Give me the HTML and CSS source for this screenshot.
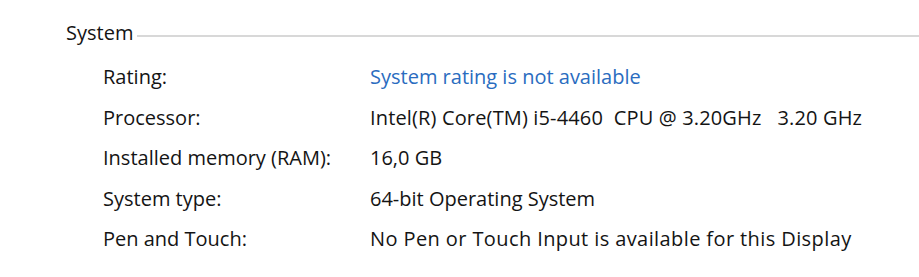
FILE: index.html
```html
<!DOCTYPE html>
<html lang="en">
<head>
<meta charset="utf-8">
<title>System</title>
<link rel="stylesheet" href="styles.css">
</head>
<body>
<section class="group">
  <div class="group-header">
    <span class="group-title">System</span>
    <span class="group-rule"></span>
  </div>
  <div class="props">
    <div class="label">Rating:</div>
    <div class="value"><a class="link" href="#">System rating is not available</a></div>
    <div class="label">Processor:</div>
    <div class="value pre">Intel(R) Core(TM) i5-4460  CPU @ 3.20GHz   3.20 GHz</div>
    <div class="label">Installed memory (RAM):</div>
    <div class="value">16,0 GB</div>
    <div class="label">System type:</div>
    <div class="value">64-bit Operating System</div>
    <div class="label">Pen and Touch:</div>
    <div class="value wide">No Pen or Touch Input is available for this Display</div>
  </div>
</section>
</body>
</html>
```
FILE: styles.css
```css
html, body {
  margin: 0;
  padding: 0;
  background: #ffffff;
}
body {
  font-family: "Open Sans", "Noto Sans", sans-serif;
  font-size: 20px;
  color: #141414;
}
.group {
  padding: 13px 0 0 66px;
}
.group-header {
  display: flex;
  align-items: center;
  height: 40px;
}
.group-title {
  line-height: 40px;
}
.group-rule {
  flex: 1;
  height: 2px;
  margin: 6px 0 0 4px;
  background: #d8d8d8;
}
.props {
  display: grid;
  grid-template-columns: 267px 1fr;
  grid-auto-rows: 40.5px;
  padding-left: 37px;
  margin-top: 4px;
}
.label, .value {
  line-height: 40.5px;
  white-space: nowrap;
}
.pre {
  white-space: pre;
  letter-spacing: 0.15px;
}
.wide {
  letter-spacing: 0.4px;
}
.link {
  color: #2a6cc0;
  text-decoration: none;
}
```
